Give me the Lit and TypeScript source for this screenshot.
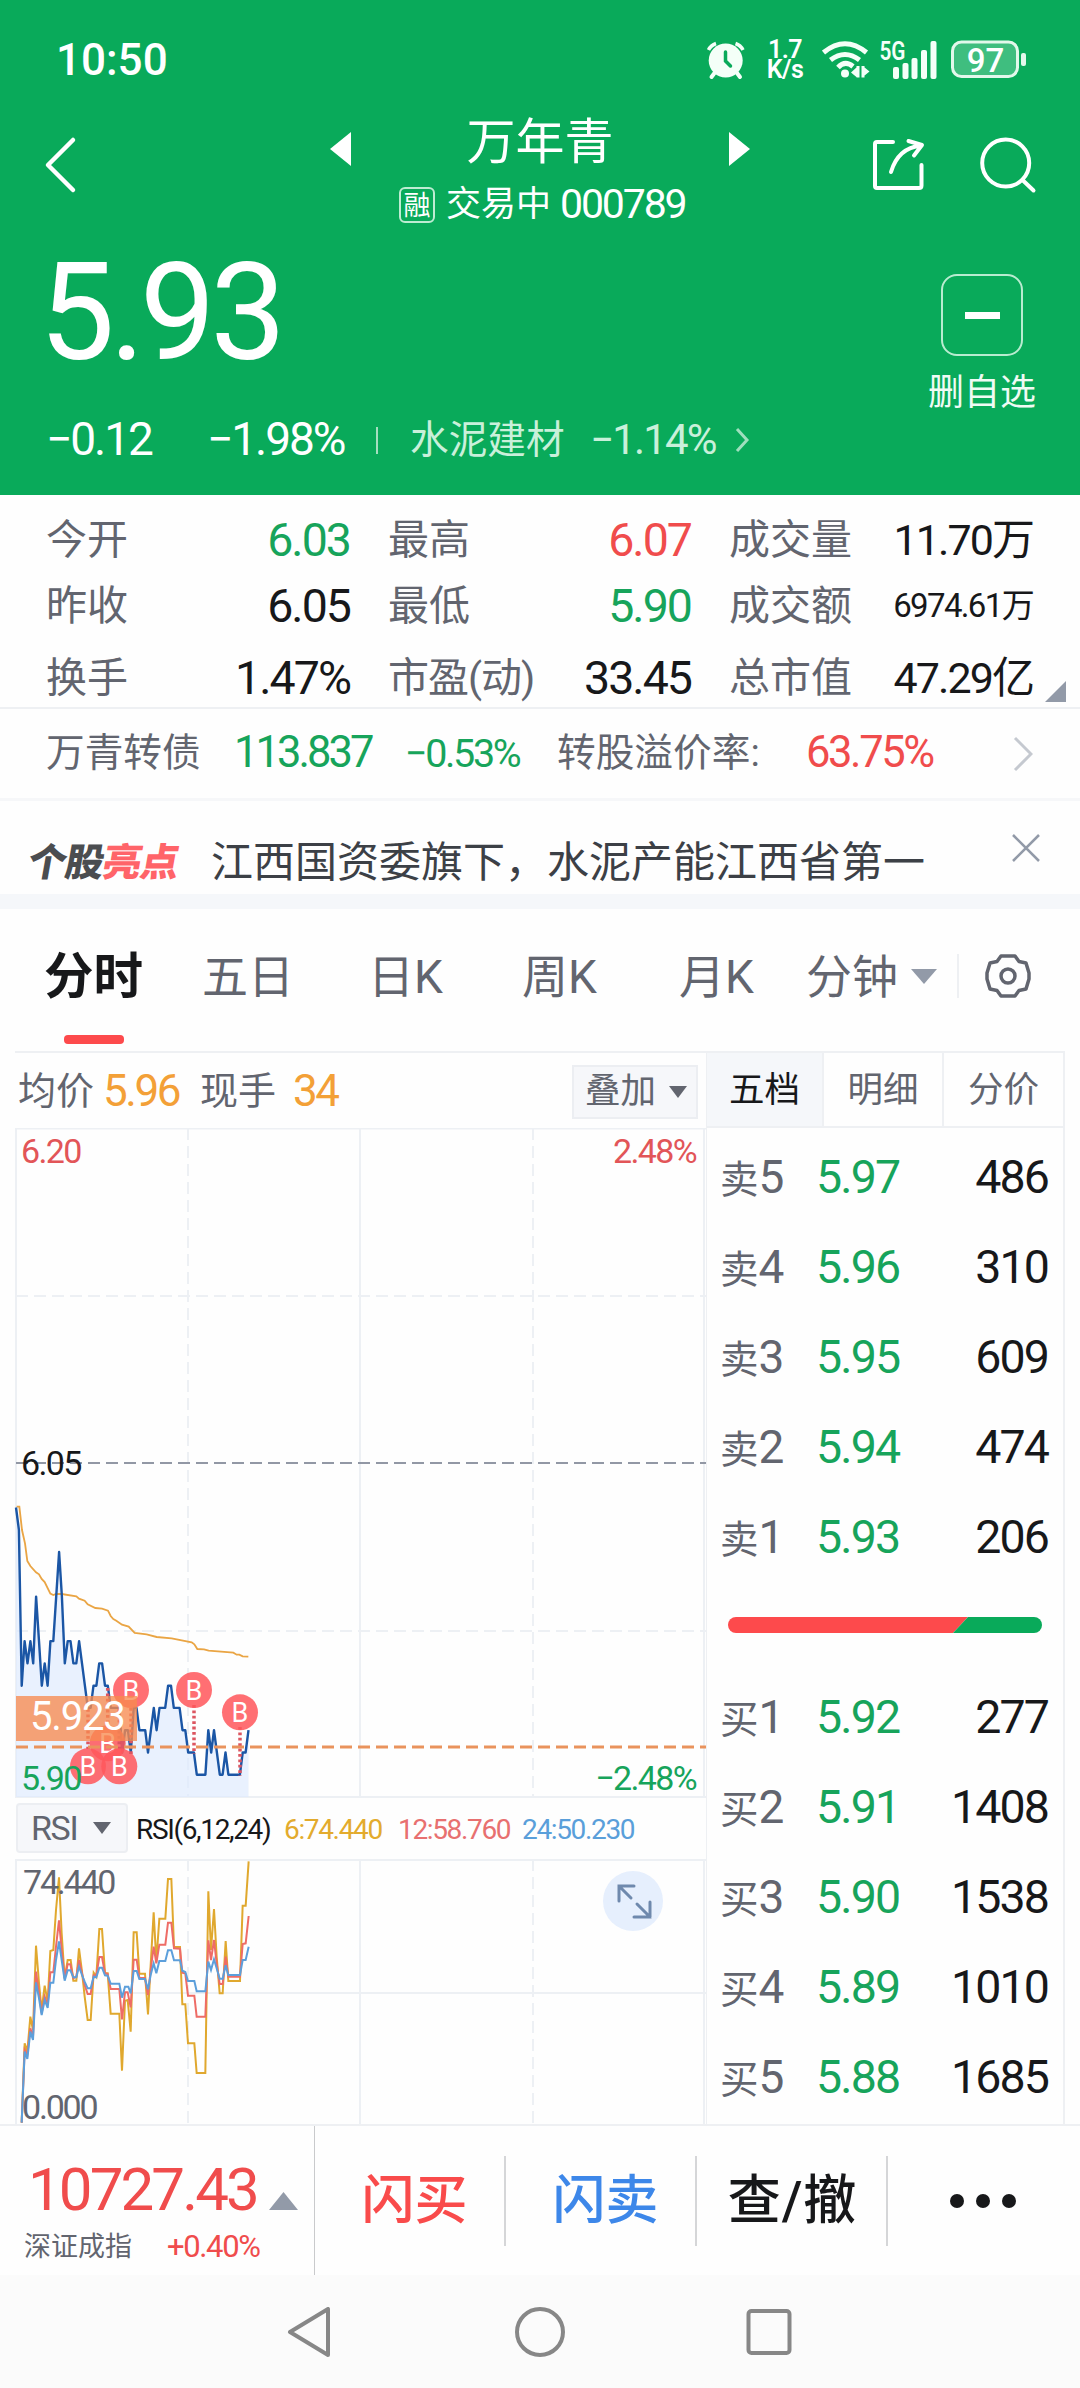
import { LitElement, html, css, svg } from "lit";
import { customElement } from "lit/decorators.js";

type Quote = { label: string; value: string; tone: string; size?: string };
type Level = { side: string; price: string; volume: string };

const QUOTES: Quote[] = [
  { label: "今开", value: "6.03", tone: "down" },
  { label: "最高", value: "6.07", tone: "up" },
  { label: "成交量", value: "11.70万", tone: "ink", size: "mid" },
  { label: "昨收", value: "6.05", tone: "ink" },
  { label: "最低", value: "5.90", tone: "down" },
  { label: "成交额", value: "6974.61万", tone: "ink", size: "small" },
  { label: "换手", value: "1.47%", tone: "ink" },
  { label: "市盈(动)", value: "33.45", tone: "ink" },
  { label: "总市值", value: "47.29亿", tone: "ink", size: "mid" },
];

const ASKS: Level[] = [
  { side: "卖5", price: "5.97", volume: "486" },
  { side: "卖4", price: "5.96", volume: "310" },
  { side: "卖3", price: "5.95", volume: "609" },
  { side: "卖2", price: "5.94", volume: "474" },
  { side: "卖1", price: "5.93", volume: "206" },
];

const BIDS: Level[] = [
  { side: "买1", price: "5.92", volume: "277" },
  { side: "买2", price: "5.91", volume: "1408" },
  { side: "买3", price: "5.90", volume: "1538" },
  { side: "买4", price: "5.89", volume: "1010" },
  { side: "买5", price: "5.88", volume: "1685" },
];

// Last traded price of each minute, in cents.
const MINUTES = [
  603, 602, 595, 597, 596, 597, 596, 599, 597, 595, 596, 595, 597, 597, 599, 601, 599, 596, 597, 597,
  596, 596, 597, 596, 595, 594, 594, 595, 595, 596, 596, 595, 595, 594, 594, 594, 594, 592, 593, 593,
  592, 594, 594, 593, 593, 593, 592, 593, 594, 593, 594, 594, 594, 595, 595, 594, 594, 594, 593, 593,
  592, 592, 592, 591, 591, 591, 591, 593, 592, 593, 592, 591, 591, 592, 591, 591, 591, 591, 591, 592,
  592, 593,
];

const STEP = 2.87;
const priceX = (i: number) => 16 + i * STEP;
const priceY = (cents: number) => 1797 - (cents - 590) * 22.27;
const PRICE_LINE = MINUTES.map((c, i) => `${priceX(i).toFixed(1)},${priceY(c).toFixed(1)}`).join(" ");
const PRICE_AREA = `16,1797 ${PRICE_LINE} ${priceX(MINUTES.length - 1).toFixed(1)},1797`;

// Study lines, in thirds of a pixel.
const AVERAGE =
  "50,80 58,80 66,150 75,190 82,243 91,258 108,277 117,283 125,297 134,306 151,341 160,345 168,342 185,342 229,349 237,356 254,362 263,373 286,384 306,386 324,392 332,408 340,417 349,422 366,434 386,440 404,459 440,463 470,471 515,475 575,487 583,493 592,507 612,508 626,512 700,518 710,524 718,524 728,529 745,530";
const RSI6 =
  "65,818 74,580 82,605 91,500 99,540 108,287 117,400 125,480 134,407 143,455 151,303 160,300 168,180 177,82 185,250 194,385 203,330 212,330 220,392 229,392 237,295 246,365 254,440 263,510 272,510 281,368 289,380 298,237 306,237 315,370 323,370 332,491 358,491 366,662 375,452 383,450 392,545 401,247 410,247 418,371 435,371 444,493 452,345 461,187 469,335 478,206 496,206 504,87 514,87 522,291 540,291 547,463 556,463 564,580 583,580 590,669 616,669 625,124 633,300 642,177 650,320 659,430 668,430 677,273 685,393 720,393 728,167 737,167 746,34";
const RSI12 =
  "65,818 74,600 82,615 91,535 99,560 108,365 117,430 125,490 134,440 143,465 151,367 160,367 168,290 177,211 185,300 194,385 203,343 211,343 220,385 229,380 237,330 246,370 254,405 263,432 272,432 281,376 289,376 298,321 306,321 315,370 323,372 332,417 358,417 366,508 375,427 383,427 392,472 401,329 410,329 418,383 435,384 444,435 452,360 461,290 469,340 478,284 496,284 504,218 514,218 522,295 540,296 547,368 556,371 564,437 583,437 590,500 616,500 625,271 633,330 642,270 650,340 659,402 668,402 677,320 685,380 720,380 728,282 737,280 746,198";
const RSI24 =
  "65,818 74,605 82,627 91,545 99,570 108,397 117,445 125,495 134,450 143,474 151,398 160,398 168,330 177,274 185,330 194,392 203,361 211,361 220,382 229,382 237,350 246,375 254,395 263,415 272,415 281,380 289,382 298,353 306,353 315,376 323,377 332,401 358,401 366,443 375,410 385,410 392,430 401,363 410,363 418,387 435,387 444,418 452,375 461,340 469,370 478,333 496,333 504,301 514,301 522,331 540,331 547,362 556,366 564,393 583,393 590,424 616,424 625,335 633,360 642,328 650,355 659,386 668,386 677,346 685,375 720,375 728,330 737,330 746,290";

// Buy marks: centre of the badge and the span of its dotted stem.
const BUYS = [
  { x: 107.7, y: 1743.3, from: 1688, to: 1726 },
  { x: 88, y: 1766.3, from: 1709, to: 1749 },
  { x: 119.3, y: 1766.3, from: 1709, to: 1749 },
  { x: 131, y: 1690, from: 1708, to: 1754 },
  { x: 194, y: 1690, from: 1705, to: 1754 },
  { x: 240, y: 1712.3, from: 1727, to: 1776 },
];

@customElement("app-root")
export class AppRoot extends LitElement {
  static styles = css`
    :host {
      display: block;
      width: 1080px;
      height: 2388px;
      overflow: hidden;
      background: #fefefe;
      color: #17181a;
      font-family: Roboto, "Noto Sans CJK SC", sans-serif;
      letter-spacing: 0;
      line-height: 1.2;
    }
    * { box-sizing: border-box; }
    svg { display: block; flex: none; }
    .num { letter-spacing: -0.044em; white-space: nowrap; }
    .up { color: #f04c4c; }
    .down { color: #17a45b; }
    .ink { color: #17181a; }

    .top { height: 495px; background: #09aa5a; color: #fff; display: flex; flex-direction: column; }
    .status { height: 60px; margin-top: 30px; padding: 0 53px 0 56px; display: flex; align-items: center; flex: none; }
    .clock { font-size: 44px; font-weight: 500; letter-spacing: 0; margin-right: auto; }
    .speed { width: 44px; margin: 0 15px 0 18px; font-size: 25px; line-height: 20px; font-weight: 600; text-align: center; letter-spacing: -0.02em; }
    .head { height: 150px; display: grid; grid-template-columns: 330px 420px 330px; flex: none; }
    .back { padding: 45px 0 0 42px; }
    .title { display: flex; flex-direction: column; }
    .names { height: 92px; padding-top: 26px; display: flex; justify-content: space-between; align-items: center; }
    .name { font-size: 49px; line-height: 50px; padding-bottom: 13px; }
    .sub { display: flex; align-items: center; height: 46px; padding-left: 69px; font-size: 35px; white-space: nowrap; }
    .badge { width: 36px; height: 36px; border: 2px solid #bdecd2; border-radius: 6px; font-size: 27px; line-height: 34px; text-align: center; margin-right: 11px; }
    .code { font-size: 41px; margin-left: 9px; letter-spacing: -0.052em; }
    .actions { display: flex; padding: 44px 0 0 118px; gap: 50px; }
    .quote { display: flex; height: 255px; }
    .figures { width: 900px; }
    .last { font-size: 135px; line-height: 146px; height: 142px; padding-left: 39px; letter-spacing: -0.04em; }
    .change { display: grid; grid-template-columns: 161px 169px 34px 180px 144px 20px; padding: 3px 0 0 46px; height: 113px; align-items: center; font-size: 46px; }
    .bar { width: 2px; height: 27px; background: #a5dfc0; }
    .sector { font-size: 38.7px; color: #c9f0da; white-space: nowrap; }
    .sector.num { font-size: 42px; }
    .remove { width: 164px; padding-top: 34px; display: flex; flex-direction: column; align-items: center; }
    .minus { width: 82px; height: 82px; border: 2px solid #b9ecd0; border-radius: 16px; display: flex; align-items: center; justify-content: center; }
    .minus::before { content: ""; width: 35px; height: 7px; background: #fff; }
    .remove-text { font-size: 36px; line-height: 50px; margin-top: 12px; color: #effbf4; }

    .stats { display: flex; height: 214px; border-bottom: 2px solid #eef0f3; }
    .stat-grid { width: 1034px; flex: none; display: grid; grid-template-columns: 304px 303px 304px; column-gap: 38px; grid-template-rows: 66px 72px 68px; padding: 8px 0 0 46px; }
    .stat { display: flex; justify-content: space-between; align-items: flex-start; white-space: nowrap; line-height: 74px; height: 66px; }
    .stat-label { font-size: 41px; color: #62656f; }
    .stat-label.long { letter-spacing: -1px; }
    .stat-value { font-size: 46.5px; letter-spacing: -0.042em; }
    .stat-value.mid { font-size: 43px; letter-spacing: -0.045em; }
    .stat-value.small { font-size: 33px; letter-spacing: -0.05em; }
    .stat-corner { align-self: flex-end; margin: 0 0 5px 11px; }

    .bond { height: 92px; border-bottom: 3px solid #f6f7f9; display: grid; grid-template-columns: 188px 171px 152px 249px 207px 20px; padding-left: 46px; align-items: center; font-size: 38.7px; color: #62656f; white-space: nowrap; }
    .bond .num { font-size: 43.5px; letter-spacing: -0.068em; }
    .bond .rate { letter-spacing: -0.055em; }
    .bond .pct { font-size: 39.5px; letter-spacing: -0.06em; }
    .note { height: 93px; display: grid; grid-template-columns: 180px 800px 30px; padding-left: 31px; align-items: center; }
    .brand { font-size: 38.5px; font-weight: 900; transform: skewX(-10deg); letter-spacing: -1px; color: #4b4d50; white-space: nowrap; padding-top: 30px; line-height: 40px; }
    .brand-hot { color: #ff6469; }
    .note-text { font-size: 42px; color: #3c4046; white-space: nowrap; padding-top: 31px; line-height: 50px; }
    .band { height: 15px; background: #f5f7fa; }

    .tabs { height: 142px; display: grid; grid-template-columns: 158px 166px 154px 157px 127px 105px 46px 28px 60px; padding: 0 0 8px 44px; align-items: center; font-size: 46px; color: #62656f; white-space: nowrap; }
    .tab { height: 134px; line-height: 136px; }
    .tab.on { position: relative; font-size: 49.5px; font-weight: 700; color: #17181a; }
    .tab.on::after { content: ""; position: absolute; left: 20px; top: 126px; width: 60px; height: 9px; border-radius: 4px; background: #fd4a4c; }
    .rule { width: 2px; height: 44px; background: #eef0f3; }

    .market { height: 1073px; display: grid; grid-template-columns: 706px 359px; }
    .charts { display: flex; flex-direction: column; }
    .chart-head { height: 77px; margin-left: 15px; border-top: 2px solid #eef0f3; display: grid; grid-template-columns: 85px 97px 93px 279px 126px; padding: 2px 0 0 3px; align-items: center; font-size: 38px; color: #62656f; white-space: nowrap; }
    .chart-head .num { font-size: 44px; color: #f3a037; letter-spacing: -0.055em; }
    .pick { height: 54px; border: 2px solid #eceef2; background: #f6f7fa; display: flex; align-items: center; font-size: 35.5px; padding-left: 11px; gap: 13px; }
    .study { height: 61px; padding: 5px 0 6px 16px; display: grid; grid-template-columns: 120px 148px 114px 124px 120px; align-items: center; font-size: 28px; color: #17181a; white-space: nowrap; }
    .study .num { letter-spacing: -0.048em; padding-top: 3px; }
    .study .pick { width: 112px; height: 50px; border-radius: 4px; font-size: 34px; padding-left: 13px; gap: 16px; color: #62656f; letter-spacing: -0.04em; }
    .fast { color: #e3ab2d; }
    .medium { color: #e87070; }
    .slow { color: #5a9fda; }
    .axis { font-size: 34px; letter-spacing: -0.048em; font-family: Roboto, sans-serif; }
    .tight { letter-spacing: -0.065em; }
    .tag { font-size: 40px; letter-spacing: -0.03em; fill: #fff; }
    .mark { font-size: 27px; fill: #fff; text-anchor: middle; letter-spacing: 0; }

    .book { border: solid #eef0f3; border-width: 2px 2px 0 1px; display: flex; flex-direction: column; }
    .book-tabs { height: 75px; display: grid; grid-template-columns: 117px 120px 1fr; border-bottom: 2px solid #eef0f3; font-size: 35.5px; line-height: 74px; text-align: center; color: #62656f; flex: none; }
    .book-tab { border-right: 2px solid #eef0f3; height: 73px; }
    .book-tab:last-child { border-right: 0; }
    .book-tab.on { background: #f5f7fa; color: #17181a; }
    .level { height: 90px; padding: 4px 15px 0 13px; display: grid; grid-template-columns: 96px 110px 1fr; align-items: center; font-size: 46.5px; flex: none; }
    .level .num { letter-spacing: -0.04em; }
    .asks { padding-top: 3px; }
    .side { color: #62656f; font-size: 38.5px; white-space: nowrap; line-height: 56px; }
    .side-num { font-size: 46px; margin-left: 0; }
    .volume { text-align: right; }
    .ratio { height: 90px; display: flex; align-items: center; padding: 0 0 2px 21px; }

    .dock { height: 151px; border-top: 2px solid #eef0f3; display: flex; align-items: center; }
    .index { width: 315px; height: 149px; border-right: 1px solid #c9cacc; padding: 30px 0 0 24px; flex: none; }
    .index-top { display: flex; height: 68px; padding-left: 4px; }
    .index-value { font-size: 60px; line-height: 68px; width: 241px; letter-spacing: -0.048em; }
    .index-arrow { margin-top: 36px; }
    .index-low { display: grid; grid-template-columns: 143px 1fr; align-items: center; height: 46px; font-size: 27px; line-height: 46px; color: #62656f; white-space: nowrap; }
    .index-low .num { font-size: 31px; }
    .action { width: 191px; height: 90px; line-height: 90px; border-right: 2px solid #d5d6d8; padding-left: 10px; font-size: 53px; font-weight: 500; text-align: center; white-space: nowrap; flex: none; }
    .action.wide { padding-left: 2px; letter-spacing: 1px; }
    .buy { color: #f94b4b; }
    .sell { color: #3d87e9; }
    .more { padding-left: 61px; }
    .nav { height: 114px; background: #fbfbfb; padding: 32px 0 0 285px; display: flex; gap: 180px; }
  `;

  private level(l: Level) {
    return html`<div class="level">
      <span class="side">${l.side[0]}<span class="side-num">${l.side[1]}</span></span>
      <span class="num down">${l.price}</span>
      <span class="num volume">${l.volume}</span>
    </div>`;
  }

  private caret(color: string) {
    return html`<svg width="18" height="12" viewBox="0 0 18 12"><path d="M0 0H18L9 12Z" fill=${color} /></svg>`;
  }

  private top() {
    return html`<header class="top">
      <div class="status">
        <span class="clock">10:50</span>
        <svg width="38" height="40" viewBox="0 0 38 40" fill="#f4fff8">
          <path d="M1.500 10A13 13 0 0 1 9 3.500M36 10A13 13 0 0 0 28.500 3.500" stroke="#f4fff8" stroke-width="3.500" fill="none" />
          <circle cx="18.700" cy="20.500" r="17" />
          <path d="M9 31 4.500 37M28.500 31 33 37" stroke="#f4fff8" stroke-width="4" stroke-linecap="round" />
          <path d="M18.500 12V21L23.500 26" stroke="#09aa5a" stroke-width="3.500" fill="none" stroke-linecap="round" />
        </svg>
        <div class="speed">1.7<br />K/s</div>
        <svg width="205" height="60" viewBox="822 30 205 60">
          <g fill="none" stroke="#f4fff8" stroke-width="5">
            <path d="M823.500 52.500Q845 35 866.500 52.500" />
            <path d="M830.500 60Q845 49 859.500 60" />
            <path d="M838 67.500Q845 60 853 66.500" />
          </g>
          <circle cx="845" cy="73.500" r="4" fill="#f4fff8" />
          <path d="M851 72.500 857 67V77.500ZM856.500 66H859.500V77.500H856.500ZM861.500 66H864.500V77.500H861.500ZM864 67 869.500 71.500 864 76Z" fill="#f4fff8" />
          <text x="879.500" y="60" font-size="25" font-weight="600" fill="#f4fff8" textLength="26" lengthAdjust="spacingAndGlyphs">5G</text>
          <g fill="#f4fff8">
            <rect x="893" y="67" width="6" height="12" rx="2" /><rect x="902.500" y="63" width="6" height="16" rx="2" />
            <rect x="911.500" y="58" width="6" height="21" rx="2" /><rect x="921" y="50" width="6" height="29" rx="2" />
            <rect x="930.500" y="41" width="6" height="38" rx="2" />
          </g>
          <rect x="952.500" y="42" width="65" height="34.500" rx="9" fill="#3fbe7f" stroke="#e2f8eb" stroke-width="3" />
          <rect x="1021" y="53" width="5" height="13" rx="2" fill="#e2f8eb" />
          <text x="985.500" y="71.500" font-size="33" font-weight="500" fill="#fff" text-anchor="middle">97</text>
        </svg>
      </div>
      <div class="head">
        <div class="back">
          <svg width="36" height="60" viewBox="0 0 36 60"><path d="M31 5 6 30 31 55" fill="none" stroke="#fff" stroke-width="4.500" stroke-linecap="round" stroke-linejoin="round" /></svg>
        </div>
        <div class="title">
          <div class="names">
            <svg width="22" height="34" viewBox="0 0 22 34"><path d="M0 17 21 0V34Z" fill="#fff" /></svg>
            <span class="name">万年青</span>
            <svg width="22" height="34" viewBox="0 0 22 34"><path d="M22 17 1 0V34Z" fill="#fff" /></svg>
          </div>
          <div class="sub"><span class="badge">融</span>交易中<span class="num code">000789</span></div>
        </div>
        <div class="actions">
          <svg width="60" height="60" viewBox="868 134 60 60" fill="none" stroke="#fff" stroke-width="4" stroke-linecap="round" stroke-linejoin="round">
            <path d="M893 142H877Q875 142 875 144V186Q875 188 877 188H919Q921.500 188 921.500 185.500V165" />
            <path d="M891 172Q898 148 921 145.500M908.500 141 922 145 914 155.500" />
          </svg>
          <svg width="60" height="60" viewBox="978 134 60 60" fill="none" stroke="#fff" stroke-width="4" stroke-linecap="round">
            <circle cx="1005.700" cy="163" r="23.500" /><path d="M1022.500 180 1033.500 190.500" />
          </svg>
        </div>
      </div>
      <div class="quote">
        <div class="figures">
          <div class="last">5.93</div>
          <div class="change">
            <span class="num">−0.12</span><span class="num">−1.98%</span><i class="bar"></i>
            <span class="sector">水泥建材</span><span class="num sector">−1.14%</span>
            <svg width="16" height="28" viewBox="0 0 16 28"><path d="M3 3 13 14 3 25" fill="none" stroke="#9fdfbe" stroke-width="3" /></svg>
          </div>
        </div>
        <div class="remove"><div class="minus"></div><span class="remove-text">删自选</span></div>
      </div>
    </header>`;
  }

  private priceChart() {
    return html`<svg width="706" height="670" viewBox="0 1128 706 670">
      <g stroke="#edf0f4" stroke-width="2" fill="none">
        <path d="M15 1128.500H706M16 1128V1797M360 1128V1797M704 1128V1797M15 1797H706" />
        <path d="M188 1128V1797M533 1128V1797" stroke-dasharray="12 6" />
        <path d="M16 1296H706M16 1631H706" stroke-dasharray="12 6" />
      </g>
      <path d="M16 1463H706" stroke="#9298a5" stroke-width="2" stroke-dasharray="12 6" />
      <polygon points=${PRICE_AREA} fill="#dfeafd" fill-opacity=".68" />
      <polyline transform="translate(0 1480) scale(.33333)" points=${AVERAGE} fill="none" stroke="#eaa544" stroke-width="5.500" />
      <polyline points=${PRICE_LINE} fill="none" stroke="#1b56a5" stroke-width="2.400" stroke-linejoin="round" />
      ${BUYS.map(
        (b) => svg`<path d="M${b.x} ${b.from}V${b.to}" stroke="#dc5560" stroke-width="3.500" stroke-dasharray="2.800 2.600" />
          <circle cx=${b.x} cy=${b.y} r="18" fill="#ff575c" fill-opacity=".86" />
          <text class="axis mark" x=${b.x} y=${b.y + 9.5}>B</text>`,
      )}
      <path d="M16 1747H706" stroke="#e9935d" stroke-width="3" stroke-dasharray="12 6" />
      <rect x="16" y="1696" width="121" height="45" fill="#f78b50" fill-opacity=".78" />
      <text class="axis tag" x="30" y="1729.500">5.923</text>
      <g class="axis">
        <text x="21" y="1162.500" fill="#e25558">6.20</text>
        <text x="696" y="1162.500" fill="#e25558" text-anchor="end">2.48%</text>
        <text x="21" y="1475" fill="#17181a">6.05</text>
        <text x="21" y="1790" fill="#17a45b">5.90</text>
        <text x="696" y="1790" fill="#17a45b" text-anchor="end">−2.48%</text>
      </g>
    </svg>`;
  }

  private rsiChart() {
    return html`<svg width="706" height="265" viewBox="0 1859 706 265">
      <g stroke="#edf0f4" stroke-width="2" fill="none">
        <path d="M15 1860H706M16 1859V2124M360 1859V2124M704 1859V2124M16 1993H706" />
        <path d="M188 1859V2124M533 1859V2124" stroke-dasharray="12 6" />
      </g>
      <g transform="translate(0 1850) scale(.33333)" fill="none" stroke-width="6">
        <polyline points=${RSI6} stroke="#e0a82e" />
        <polyline points=${RSI12} stroke="#ee6c66" />
        <polyline points=${RSI24} stroke="#5c9fdb" />
      </g>
      <g class="axis tight" fill="#62656f">
        <text x="23" y="1894">74.440</text>
        <text x="22" y="2118.500">0.000</text>
      </g>
      <circle cx="633" cy="1901" r="30" fill="#e6effd" />
      <path d="M619 1901V1886H634M619 1886 631 1898M650 1902V1917H634M650 1917 637 1904" fill="none" stroke="#6f89ad" stroke-width="3" stroke-linecap="round" />
    </svg>`;
  }

  render() {
    return html`
      ${this.top()}
      <section class="stats">
        <div class="stat-grid">
          ${QUOTES.map(
            (q) => html`<div class="stat"><span class="stat-label ${q.label.length > 3 ? "long" : ""}">${q.label}</span><span class="stat-value ${q.tone} ${q.size ?? ""}">${q.value}</span></div>`,
          )}
        </div>
        <svg class="stat-corner" width="21" height="21" viewBox="0 0 21 21"><path d="M21 0V21H0Z" fill="#929aa8" /></svg>
      </section>
      <section class="bond">
        <span>万青转债</span><span class="num down">113.837</span><span class="num pct down">−0.53%</span>
        <span>转股溢价率:</span><span class="num rate up">63.75%</span>
        <svg width="20" height="36" viewBox="0 0 20 36"><path d="M2 2 18 18 2 34" fill="none" stroke="#c5c9d0" stroke-width="3" /></svg>
      </section>
      <section class="note">
        <span class="brand">个股<span class="brand-hot">亮点</span></span>
        <span class="note-text">江西国资委旗下，水泥产能江西省第一</span>
        <svg width="30" height="30" viewBox="0 0 30 30"><path d="M2 2 28 28M28 2 2 28" stroke="#929aa8" stroke-width="2.500" /></svg>
      </section>
      <div class="band"></div>
      <nav class="tabs">
        <span class="tab on">分时</span><span class="tab">五日</span><span class="tab">日K</span><span class="tab">周K</span>
        <span class="tab">月K</span><span class="tab">分钟</span>
        <svg width="26" height="15" viewBox="0 0 26 15"><path d="M0 0H26L13 15Z" fill="#929aa8" /></svg>
        <i class="rule"></i>
        <svg width="46" height="46" viewBox="-23 -23 46 46" fill="none" stroke="#62656f" stroke-width="3.500" stroke-linejoin="round">
          <path d="M-7 -20H7L11 -14.500 18 -13 21 -3V3L18 13 11 14.500 7 20H-7L-11 14.500 -18 13 -21 3V-3L-18 -13 -11 -14.500Z" />
          <circle r="7" />
        </svg>
      </nav>
      <section class="market">
        <div class="charts">
          <div class="chart-head">
            <span>均价</span><span class="num">5.96</span><span>现手</span><span class="num">34</span>
            <span class="pick">叠加${this.caret("#62656f")}</span>
          </div>
          ${this.priceChart()}
          <div class="study">
            <span class="pick">RSI${this.caret("#62656f")}</span>
            <span class="num">RSI(6,12,24)</span><span class="num fast">6:74.440</span>
            <span class="num medium">12:58.760</span><span class="num slow">24:50.230</span>
          </div>
          ${this.rsiChart()}
        </div>
        <div class="book">
          <div class="book-tabs"><span class="book-tab on">五档</span><span class="book-tab">明细</span><span class="book-tab">分价</span></div>
          <div class="asks">${ASKS.map((l) => this.level(l))}</div>
          <div class="ratio">
            <svg width="314" height="16" viewBox="0 0 314 16">
              <path d="M8 0H240L225 16H8A8 8 0 0 1 8 0Z" fill="#fd4a4c" />
              <path d="M240 0H306A8 8 0 0 1 306 16H225Z" fill="#09aa5a" />
            </svg>
          </div>
          <div>${BIDS.map((l) => this.level(l))}</div>
        </div>
      </section>
      <footer class="dock">
        <div class="index">
          <div class="index-top">
            <span class="index-value up">10727.43</span>
            <svg class="index-arrow" width="29" height="18" viewBox="0 0 29 18"><path d="M0 18 14.500 0 29 18Z" fill="#929aa8" /></svg>
          </div>
          <div class="index-low"><span>深证成指</span><span class="num up">+0.40%</span></div>
        </div>
        <span class="action buy">闪买</span><span class="action sell">闪卖</span><span class="action wide">查/撤</span>
        <div class="more">
          <svg width="68" height="16" viewBox="0 0 68 16" fill="#17181a"><circle cx="8" cy="8" r="7" /><circle cx="34" cy="8" r="7" /><circle cx="60" cy="8" r="7" /></svg>
        </div>
      </footer>
      <div class="nav">
        <svg width="50" height="50" viewBox="285 2306 50 50" fill="none" stroke="#878787" stroke-width="4" stroke-linejoin="round"><path d="M328 2308V2354L290 2331Z" /></svg>
        <svg width="50" height="50" viewBox="515 2306 50 50" fill="none" stroke="#878787" stroke-width="4"><circle cx="540" cy="2331" r="23" /></svg>
        <svg width="50" height="50" viewBox="745 2306 50 50" fill="none" stroke="#878787" stroke-width="4"><rect x="748.500" y="2310" width="41" height="42" rx="3" /></svg>
      </div>
    `;
  }
}
